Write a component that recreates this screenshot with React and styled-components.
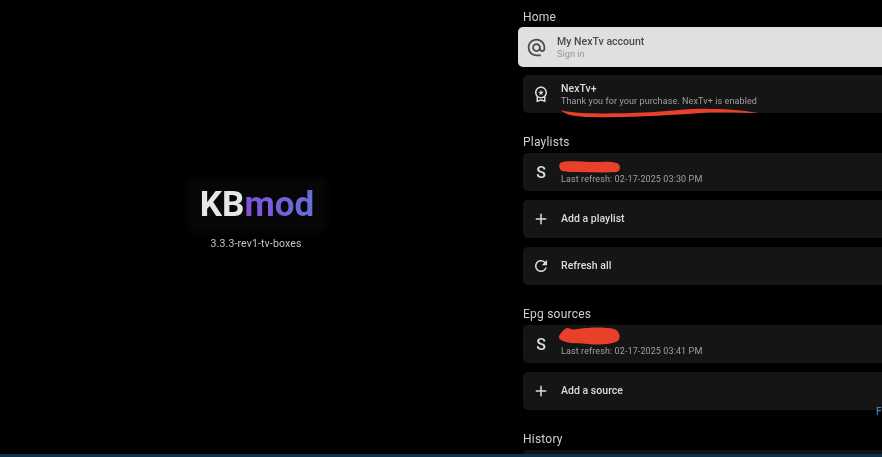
import React from 'react';
import styled, { createGlobalStyle } from 'styled-components';
import { MdAdd, MdAlternateEmail, MdOutlineWorkspacePremium, MdRefresh } from 'react-icons/md';

const GlobalStyle = createGlobalStyle`
  html, body {
    margin: 0;
    background: #000;
    overflow: hidden;
  }
  body {
    font-family: Roboto, "Liberation Sans", sans-serif;
  }
`;

const Screen = styled.div`
  position: relative;
  display: flex;
  width: 882px;
  height: 457px;
  overflow: hidden;
  background: #000;
  filter: blur(0.35px);
`;

const Brand = styled.div`
  width: 514px;
  flex: none;
  display: flex;
  flex-direction: column;
  align-items: center;
  padding-top: 181px;
  box-sizing: border-box;
`;

const Logo = styled.div`
  padding: 2px 10px;
  font-size: 35px;
  line-height: 44px;
  font-weight: 700;
  color: #e6e6e6;
  background: #060606;
  box-shadow: 0 0 10px 4px #060606;
`;

const LogoAccent = styled.span`
  background: linear-gradient(90deg, #8152da, #6570d8);
  -webkit-background-clip: text;
  background-clip: text;
  color: transparent;
`;

const Version = styled.div`
  margin-top: 8px;
  margin-left: -2px;
  font-size: 10.5px;
  line-height: 14px;
  letter-spacing: 0.14px;
  color: #c4c4c4;
`;

const Content = styled.div`
  flex: 1;
  min-width: 0;
  padding: 8px 0 0 9px;
`;

const Section = styled.section`
  display: flex;
  flex-direction: column;
  gap: 9px;
  margin-bottom: 20px;
`;

const Heading = styled.h2`
  margin: 1px 0 -6px;
  font-size: 12px;
  line-height: 16px;
  font-weight: 400;
  letter-spacing: 0.22px;
  color: #cfcfcf;
`;

const Card = styled.div`
  position: relative;
  flex: none;
  display: flex;
  align-items: center;
  box-sizing: border-box;
  width: 420px;
  height: ${p => (p.$focused ? '40px' : '38px')};
  margin: ${p => (p.$focused ? '-1px 0 -1px -5px' : '0')};
  border-radius: 5px;
  background: ${p => (p.$focused ? '#e0e0e0' : '#151515')};
  color: ${p => (p.$focused ? '#4a4a4a' : '#dcdcdc')};
`;

const IconSlot = styled.div`
  width: ${p => (p.$focused ? '39px' : '38px')};
  flex: none;
  display: flex;
  justify-content: center;
  font-size: ${p => (p.$letter ? '16px' : p.$focused ? '21px' : '18px')};
  font-weight: 500;
  padding-right: 2px;
  box-sizing: border-box;
`;

const TextBlock = styled.div`
  display: flex;
  flex-direction: column;
  min-width: 0;
  margin-top: 2px;
`;

const Title = styled.div`
  font-size: 10.5px;
  line-height: 12px;
  font-weight: 500;
  letter-spacing: 0.03px;
  white-space: nowrap;
  min-height: ${p => (p.$blank ? '12px' : '0')};
`;

const Subtitle = styled.div`
  font-size: 9px;
  line-height: 12px;
  letter-spacing: 0.1px;
  white-space: nowrap;
  color: ${p => (p.$focused ? '#969696' : '#a0a0a0')};
`;

const Scribble = styled.svg`
  position: absolute;
  left: ${p => p.$left}px;
  top: ${p => p.$top}px;
  overflow: visible;
`;

const StrayLetter = styled.span`
  position: absolute;
  left: 876px;
  top: 406px;
  font-size: 10px;
  line-height: 12px;
  font-weight: 500;
  color: #3a80c0;
`;

const BottomBar = styled.div`
  position: absolute;
  left: 0;
  right: 0;
  bottom: 0;
  height: 3px;
  background: #0f3050;
`;

const RED = '#e8402a';

function App() {
  return (
    <Screen>
      <GlobalStyle />

      <Brand>
        <Logo>KB<LogoAccent>mod</LogoAccent></Logo>
        <Version>3.3.3-rev1-tv-boxes</Version>
      </Brand>

      <Content>
        <Section>
          <Heading>Home</Heading>
          <Card $focused>
            <IconSlot $focused><MdAlternateEmail /></IconSlot>
            <TextBlock>
              <Title>My NexTv account</Title>
              <Subtitle $focused>Sign in</Subtitle>
            </TextBlock>
          </Card>
          <Card>
            <IconSlot><MdOutlineWorkspacePremium /></IconSlot>
            <TextBlock>
              <Title>NexTv+</Title>
              <Subtitle>Thank you for your purchase. NexTv+ is enabled</Subtitle>
            </TextBlock>
            <Scribble $left={38} $top={33} width="198" height="8">
              <path d="M0 2 C8 5 30 6 70 5 C110 4 125 0 150 1 C170 1 185 3 197 5 C180 5 160 4 140 5 C110 7 70 10 30 9 C15 9 4 7 0 2Z" fill={RED} />
            </Scribble>
          </Card>
        </Section>

        <Section>
          <Heading>Playlists</Heading>
          <Card>
            <IconSlot $letter>S</IconSlot>
            <TextBlock>
              <Title $blank />
              <Subtitle>Last refresh: 02-17-2025 03:30 PM</Subtitle>
            </TextBlock>
            <Scribble $left={36} $top={7} width="62" height="13">
              <path d="M1 3 C8 0 20 2 32 2 C42 2 52 1 58 3 C62 5 62 10 58 12 C45 13 30 12 16 12 C8 12 2 12 1 9 C0 7 0 5 1 3Z" fill={RED} />
            </Scribble>
          </Card>
          <Card>
            <IconSlot><MdAdd /></IconSlot>
            <Title>Add a playlist</Title>
          </Card>
          <Card>
            <IconSlot><MdRefresh /></IconSlot>
            <Title>Refresh all</Title>
          </Card>
        </Section>

        <Section>
          <Heading>Epg sources</Heading>
          <Card>
            <IconSlot $letter>S</IconSlot>
            <TextBlock>
              <Title $blank />
              <Subtitle>Last refresh: 02-17-2025 03:41 PM</Subtitle>
            </TextBlock>
            <Scribble $left={35} $top={2} width="62" height="18">
              <path d="M1 9 C3 6 6 1 10 1 C13 2 14 3 20 2 C32 0 48 0 56 2 C62 4 63 11 60 14 C52 18 40 18 30 17 C22 16 14 17 8 15 C4 14 0 12 1 9Z" fill={RED} />
            </Scribble>
          </Card>
          <Card>
            <IconSlot><MdAdd /></IconSlot>
            <Title>Add a source</Title>
          </Card>
        </Section>

        <Section>
          <Heading>History</Heading>
          <Card />
        </Section>
      </Content>

      <StrayLetter>F</StrayLetter>
      <BottomBar />
    </Screen>
  );
}

export default App;
